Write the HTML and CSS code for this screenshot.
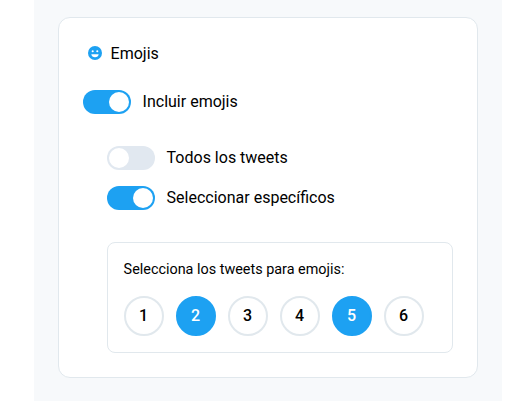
FILE: index.html
```html
<!DOCTYPE html>
<html lang="es">
<head>
<meta charset="utf-8">
<title>Emojis</title>
<link rel="stylesheet" href="styles.css">
</head>
<body>
<main class="panel">
  <section class="card">
    <h2 class="title">
      <svg class="icon" viewBox="0 0 14 14" aria-hidden="true">
        <circle cx="7" cy="7" r="7" fill="#1da1f2"/>
        <circle cx="4.7" cy="5.200" r="1.05" fill="#fff"/>
        <circle cx="9.3" cy="5.200" r="1.05" fill="#fff"/>
        <path d="M3.300 8.200h7.400c-.2 1.800-1.700 3-3.700 3S3.500 10 3.300 8.200z" fill="#fff"/>
      </svg>
      <span>Emojis</span>
    </h2>
    <div class="row"><span class="switch on"></span><span>Incluir emojis</span></div>
    <div class="options">
      <div class="row"><span class="switch"></span><span>Todos los tweets</span></div>
      <div class="row"><span class="switch on"></span><span>Seleccionar específicos</span></div>
      <div class="picker">
        <p class="hint">Selecciona los tweets para emojis:</p>
        <div class="numbers">
          <span class="num">1</span>
          <span class="num selected">2</span>
          <span class="num">3</span>
          <span class="num">4</span>
          <span class="num selected">5</span>
          <span class="num">6</span>
        </div>
      </div>
    </div>
  </section>
</main>
</body>
</html>
```
FILE: styles.css
```css
* { box-sizing: border-box; }
body {
  margin: 0;
  background: #fff;
  color: #000;
  font: 16px/24px Roboto, sans-serif;
  overflow: hidden;
}
.panel {
  width: 468px;
  height: 401px;
  margin-left: 33.6px;
  padding: 17px 24px 0;
  background: #f7f9fb;
}
.card {
  height: 361px;
  padding: 24px;
  background: #fff;
  border: 1px solid #e1e8ed;
  border-radius: 12px;
}
.title {
  display: flex;
  align-items: center;
  gap: 9px;
  margin: 0 0 24px;
  padding-left: 5px;
  height: 24px;
  font-size: 16px;
  font-weight: 400;
}
.icon { width: 14px; height: 14px; margin-bottom: 2px; }
.row {
  display: flex;
  align-items: center;
  gap: 12px;
  height: 24px;
}
.switch {
  display: flex;
  align-items: center;
  width: 48px;
  height: 24px;
  padding: 0 2px;
  border-radius: 12px;
  background: #e1e8f0;
}
.switch::before {
  content: "";
  width: 20px;
  height: 20px;
  border-radius: 50%;
  background: #fff;
}
.switch.on { justify-content: flex-end; background: #1da1f2; }
.options {
  display: flex;
  flex-direction: column;
  gap: 16px;
  margin: 32px 0 0 24px;
}
.picker {
  width: 346px;
  height: 111px;
  margin-top: 16px;
  padding: 16px;
  border: 1px solid #e1e8ed;
  border-radius: 8px;
}
.hint {
  margin: 0 0 16px;
  font-size: 14.4px;
  line-height: 21px;
}
.numbers { display: flex; gap: 12px; }
.num {
  display: flex;
  align-items: center;
  justify-content: center;
  width: 40px;
  height: 40px;
  border: 2px solid #e1e8ed;
  border-radius: 50%;
  font-weight: 500;
}
.num.selected { background: #1da1f2; border-color: #1da1f2; color: #fff; }
```
